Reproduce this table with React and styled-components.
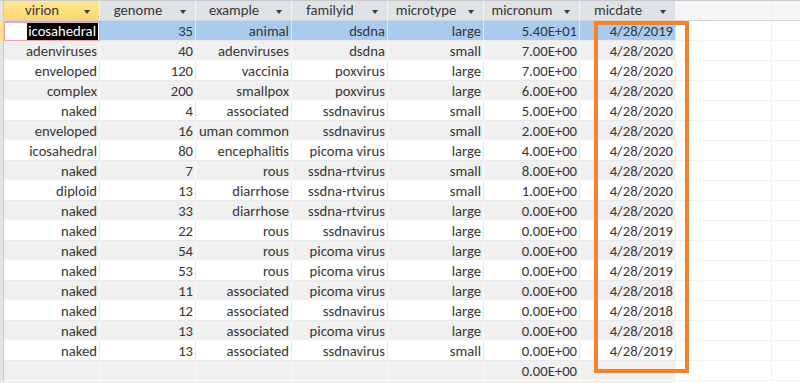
import React from 'react';
import styled, { createGlobalStyle } from 'styled-components';

const GlobalStyle = createGlobalStyle`
  html, body {
    margin: 0;
    padding: 0;
    background: #fff;
  }
  body {
    font-family: Carlito, Lato, "Open Sans", sans-serif;
    font-size: 14.67px;
    color: #363636;
  }
`;

const columns = ['virion', 'genome', 'example', 'familyid', 'microtype', 'micronum', 'micdate'];

const rows = [
  ['icosahedral', '35', 'animal', 'dsdna', 'large', '5.40E+01', '4/28/2019'],
  ['adenviruses', '40', 'adenviruses', 'dsdna', 'small', '7.00E+00', '4/28/2020'],
  ['enveloped', '120', 'vaccinia', 'poxvirus', 'large', '7.00E+00', '4/28/2020'],
  ['complex', '200', 'smallpox', 'poxvirus', 'large', '6.00E+00', '4/28/2020'],
  ['naked', '4', 'associated', 'ssdnavirus', 'small', '5.00E+00', '4/28/2020'],
  ['enveloped', '16', 'uman common', 'ssdnavirus', 'small', '2.00E+00', '4/28/2020'],
  ['icosahedral', '80', 'encephalitis', 'picoma virus', 'large', '4.00E+00', '4/28/2020'],
  ['naked', '7', 'rous', 'ssdna-rtvirus', 'small', '8.00E+00', '4/28/2020'],
  ['diploid', '13', 'diarrhose', 'ssdna-rtvirus', 'small', '1.00E+00', '4/28/2020'],
  ['naked', '33', 'diarrhose', 'ssdna-rtvirus', 'large', '0.00E+00', '4/28/2020'],
  ['naked', '22', 'rous', 'ssdnavirus', 'large', '0.00E+00', '4/28/2019'],
  ['naked', '54', 'rous', 'picoma virus', 'large', '0.00E+00', '4/28/2019'],
  ['naked', '53', 'rous', 'picoma virus', 'large', '0.00E+00', '4/28/2019'],
  ['naked', '11', 'associated', 'picoma virus', 'large', '0.00E+00', '4/28/2018'],
  ['naked', '12', 'associated', 'ssdnavirus', 'large', '0.00E+00', '4/28/2018'],
  ['naked', '13', 'associated', 'picoma virus', 'large', '0.00E+00', '4/28/2018'],
  ['naked', '13', 'associated', 'ssdnavirus', 'small', '0.00E+00', '4/28/2019'],
  ['', '', '', '', '', '0.00E+00', ''],
];

const Sheet = styled.div`
  position: relative;
  width: 800px;
  height: 383px;
  overflow: hidden;
  background: #fff;
`;

const HeaderRow = styled.div`
  display: flex;
  height: 21px;
  box-sizing: border-box;
  border-top: 1px solid #c9c9c9;
  border-bottom: 1px solid #d4d4d4;
  background: #f6f6f8;
`;

const Selector = styled.div`
  width: 4px;
  flex: none;
  box-sizing: border-box;
  border-right: 1px solid #c8c8c8;
  background: ${p => (p.$active ? '#fde38a' : '#e4e4e4')};
`;

const HeaderCell = styled.div`
  width: 96px;
  flex: none;
  box-sizing: border-box;
  display: flex;
  align-items: center;
  border-right: 1px solid #f2f2f2;
  background: ${p =>
    p.$active ? 'linear-gradient(#fee79a, #fcd869)' : '#dfe2e7'};
`;

const HeaderLabel = styled.span`
  flex: 1;
  text-align: center;
  padding-left: 2px;
  line-height: 19px;
`;

const Arrow = styled.span`
  width: 0;
  height: 0;
  margin: 2px 9px 0 6px;
  border-left: 3.5px solid transparent;
  border-right: 3.5px solid transparent;
  border-top: 4px solid #3a3a3a;
`;

const Filler = styled.div`
  width: 96px;
  flex: none;
  box-sizing: border-box;
  border-right: 1px solid #ececec;
`;

const Row = styled.div`
  display: flex;
  height: 20px;
  box-sizing: border-box;
`;

const rowBg = p => (p.$selected ? '#a8cbef' : p.$shade ? '#f0f0f0' : '#fff');

const Cell = styled.div`
  width: 96px;
  flex: none;
  box-sizing: border-box;
  display: flex;
  justify-content: flex-end;
  align-items: center;
  overflow: hidden;
  white-space: nowrap;
  padding-right: 2px;
  background: ${rowBg};
  border-right: 1px solid ${p => (p.$shade ? '#fafafa' : '#e6e6e6')};
  border-bottom: 1px solid ${p => (p.$shade ? '#fafafa' : '#e9e9e9')};
`;

const FocusCell = styled(Cell)`
  background: #fff;
  border: 1px solid #f3a3a3;
  border-top-width: 2px;
  padding-right: 1px;
`;

const Highlight = styled.span`
  background: #000;
  color: #fff;
  line-height: 17px;
  padding: 0 2px 0 1px;
`;

const EmptyCell = styled.div`
  width: 96px;
  flex: none;
  box-sizing: border-box;
  border-right: 1px solid #f1f1f1;
  border-bottom: 1px solid #f3f3f3;
`;

const Callout = styled.div`
  position: absolute;
  left: 594px;
  top: 21px;
  width: 95px;
  height: 352px;
  box-sizing: border-box;
  border: 4.5px solid #f7822a;
  pointer-events: none;
`;

const BottomEdge = styled.div`
  height: 3px;
  width: 676px;
  background: #f3efe6;
`;

const VirusTable = () => (
  <Sheet>
    <HeaderRow>
      <Selector />
      {columns.map((c, i) => (
        <HeaderCell key={c} $active={i === 0}>
          <HeaderLabel>{c}</HeaderLabel>
          <Arrow />
        </HeaderCell>
      ))}
      <Filler />
      <Filler />
    </HeaderRow>
    {rows.map((r, ri) => {
      const selected = ri === 0;
      const shade = ri % 2 === 1;
      return (
        <Row key={ri}>
          <Selector $active={selected} />
          {r.map((v, ci) =>
            selected && ci === 0 ? (
              <FocusCell key={ci}>
                <Highlight>{v}</Highlight>
              </FocusCell>
            ) : (
              <Cell key={ci} $selected={selected} $shade={shade}>
                {v}
              </Cell>
            )
          )}
          <EmptyCell />
          <EmptyCell />
        </Row>
      );
    })}
    <BottomEdge />
    <Callout />
  </Sheet>
);

const App = () => (
  <>
    <GlobalStyle />
    <VirusTable />
  </>
);

export default App;
